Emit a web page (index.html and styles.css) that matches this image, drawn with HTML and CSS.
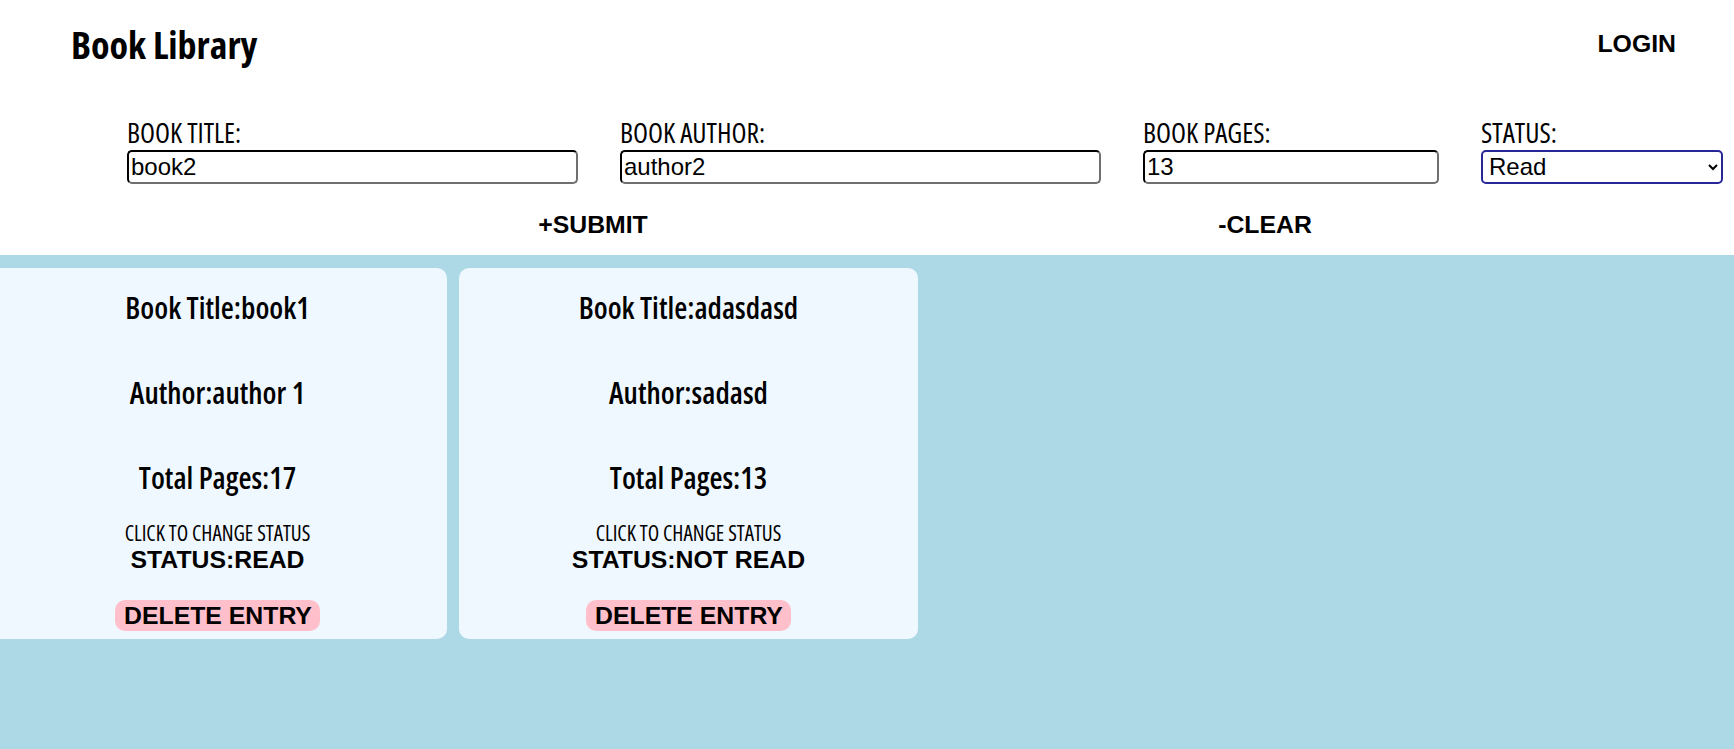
FILE: index.html
```html
<!DOCTYPE html>
<html lang="en">
<head>
<meta charset="utf-8">
<title>Book Library</title>
<link rel="stylesheet" href="styles.css">
</head>
<body>
<header class="top">
  <div class="topbar">
    <h1 class="brand">Book Library</h1>
    <button class="login">LOGIN</button>
  </div>
  <form class="book-form">
    <label class="field">
      <span class="field-label">BOOK TITLE:</span>
      <input class="field-input" type="text" value="book2">
    </label>
    <label class="field">
      <span class="field-label">BOOK AUTHOR:</span>
      <input class="field-input" type="text" value="author2">
    </label>
    <label class="field">
      <span class="field-label">BOOK PAGES:</span>
      <input class="field-input" type="text" value="13">
    </label>
    <label class="field">
      <span class="field-label">STATUS:</span>
      <select class="field-select">
        <option selected>Read</option>
        <option>Not Read</option>
      </select>
    </label>
  </form>
  <div class="actions">
    <button class="action">+SUBMIT</button>
    <button class="action">-CLEAR</button>
  </div>
</header>
<main class="shelf">
  <div class="cards">
    <article class="card">
      <h3 class="card-line">Book Title:book1</h3>
      <h3 class="card-line">Author:author 1</h3>
      <h3 class="card-line">Total Pages:17</h3>
      <p class="hint">CLICK TO CHANGE STATUS</p>
      <button class="status">STATUS:READ</button>
      <button class="delete">DELETE ENTRY</button>
    </article>
    <article class="card">
      <h3 class="card-line">Book Title:adasdasd</h3>
      <h3 class="card-line">Author:sadasd</h3>
      <h3 class="card-line">Total Pages:13</h3>
      <p class="hint">CLICK TO CHANGE STATUS</p>
      <button class="status">STATUS:NOT READ</button>
      <button class="delete">DELETE ENTRY</button>
    </article>
  </div>
</main>
</body>
</html>
```

FILE: styles.css
```css
* { box-sizing: border-box; }

html, body {
  margin: 0;
  padding: 0;
  background: #ffffff;
  color: #000000;
}

body {
  font-family: "Liberation Sans", Arial, sans-serif;
  min-height: 749px;
  display: flex;
  flex-direction: column;
  overflow: hidden;
}

.top {
  background: #ffffff;
  padding-bottom: 16px;
}

.topbar {
  height: 88px;
  display: flex;
  align-items: center;
  justify-content: space-between;
  padding: 0 58px 0 71px;
}

.brand {
  margin: 0;
  font-family: "Open Sans", sans-serif;
  font-stretch: 75%;
  font-weight: 700;
  font-size: 38px;
}

.login,
.action {
  background: none;
  border: none;
  padding: 0;
  font-family: "Liberation Sans", Arial, sans-serif;
  font-weight: 700;
  font-size: 24.8px;
  line-height: 27.6px;
  color: #000000;
}

.book-form {
  display: grid;
  grid-template-columns: 451px 481px 296px 242px;
  column-gap: 42px;
  padding: 28px 0 0 127px;
}

.field {
  display: flex;
  flex-direction: column;
}

.field-label {
  font-family: "Open Sans", sans-serif;
  font-stretch: 75%;
  font-weight: 400;
  font-size: 27.5px;
  line-height: 33.75px;
}

.field-input,
.field-select {
  width: 100%;
  height: 34px;
  margin: 0;
  font-family: "Liberation Sans", Arial, sans-serif;
  font-size: 24px;
  color: #000000;
  background: #ffffff;
}

.field-input {
  padding: 1px 2px;
  border: 2px inset #767676;
  border-top-color: #1f1f1f;
  border-left-color: #1f1f1f;
  border-right-color: #6f6f6f;
  border-bottom-color: #6f6f6f;
  border-radius: 5px;
}

.field-select {
  padding: 0 0 0 2px;
  border: 2px solid #27279a;
  border-radius: 5px;
}

.actions {
  display: grid;
  grid-template-columns: 672px 672px;
  justify-items: center;
  margin: 27.6px 0 0 257px;
}

.shelf {
  flex: 1;
  background: #add8e6;
  padding-top: 13px;
}

.cards {
  display: grid;
  grid-template-columns: 459px 459px;
  column-gap: 12px;
  margin-left: -12px;
}

.card {
  background: #f0f8ff;
  border-radius: 10px;
  display: flex;
  flex-direction: column;
  align-items: center;
  padding: 20px 0 8px;
  text-align: center;
}

.card-line {
  margin: 0 0 45px;
  font-family: "Open Sans", sans-serif;
  font-stretch: 75%;
  font-weight: 600;
  font-size: 30px;
  line-height: 40px;
}

.card-line:nth-of-type(3) {
  margin-bottom: 23.5px;
}

.hint {
  margin: 0 0 1px;
  font-family: "Open Sans", sans-serif;
  font-stretch: 75%;
  font-weight: 400;
  font-size: 21px;
  line-height: 24px;
}

.status {
  background: none;
  border: none;
  padding: 0;
  margin: 0 0 25.5px;
  font-family: "Liberation Sans", Arial, sans-serif;
  font-weight: 700;
  font-size: 24.8px;
  line-height: 27.6px;
  color: #000000;
}

.delete {
  background: #ffc0cb;
  border: none;
  border-radius: 10px;
  padding: 2px 8px 2px 9px;
  margin: 0;
  font-family: "Liberation Sans", Arial, sans-serif;
  font-weight: 700;
  font-size: 24.8px;
  line-height: 27.6px;
  color: #000000;
}
```
